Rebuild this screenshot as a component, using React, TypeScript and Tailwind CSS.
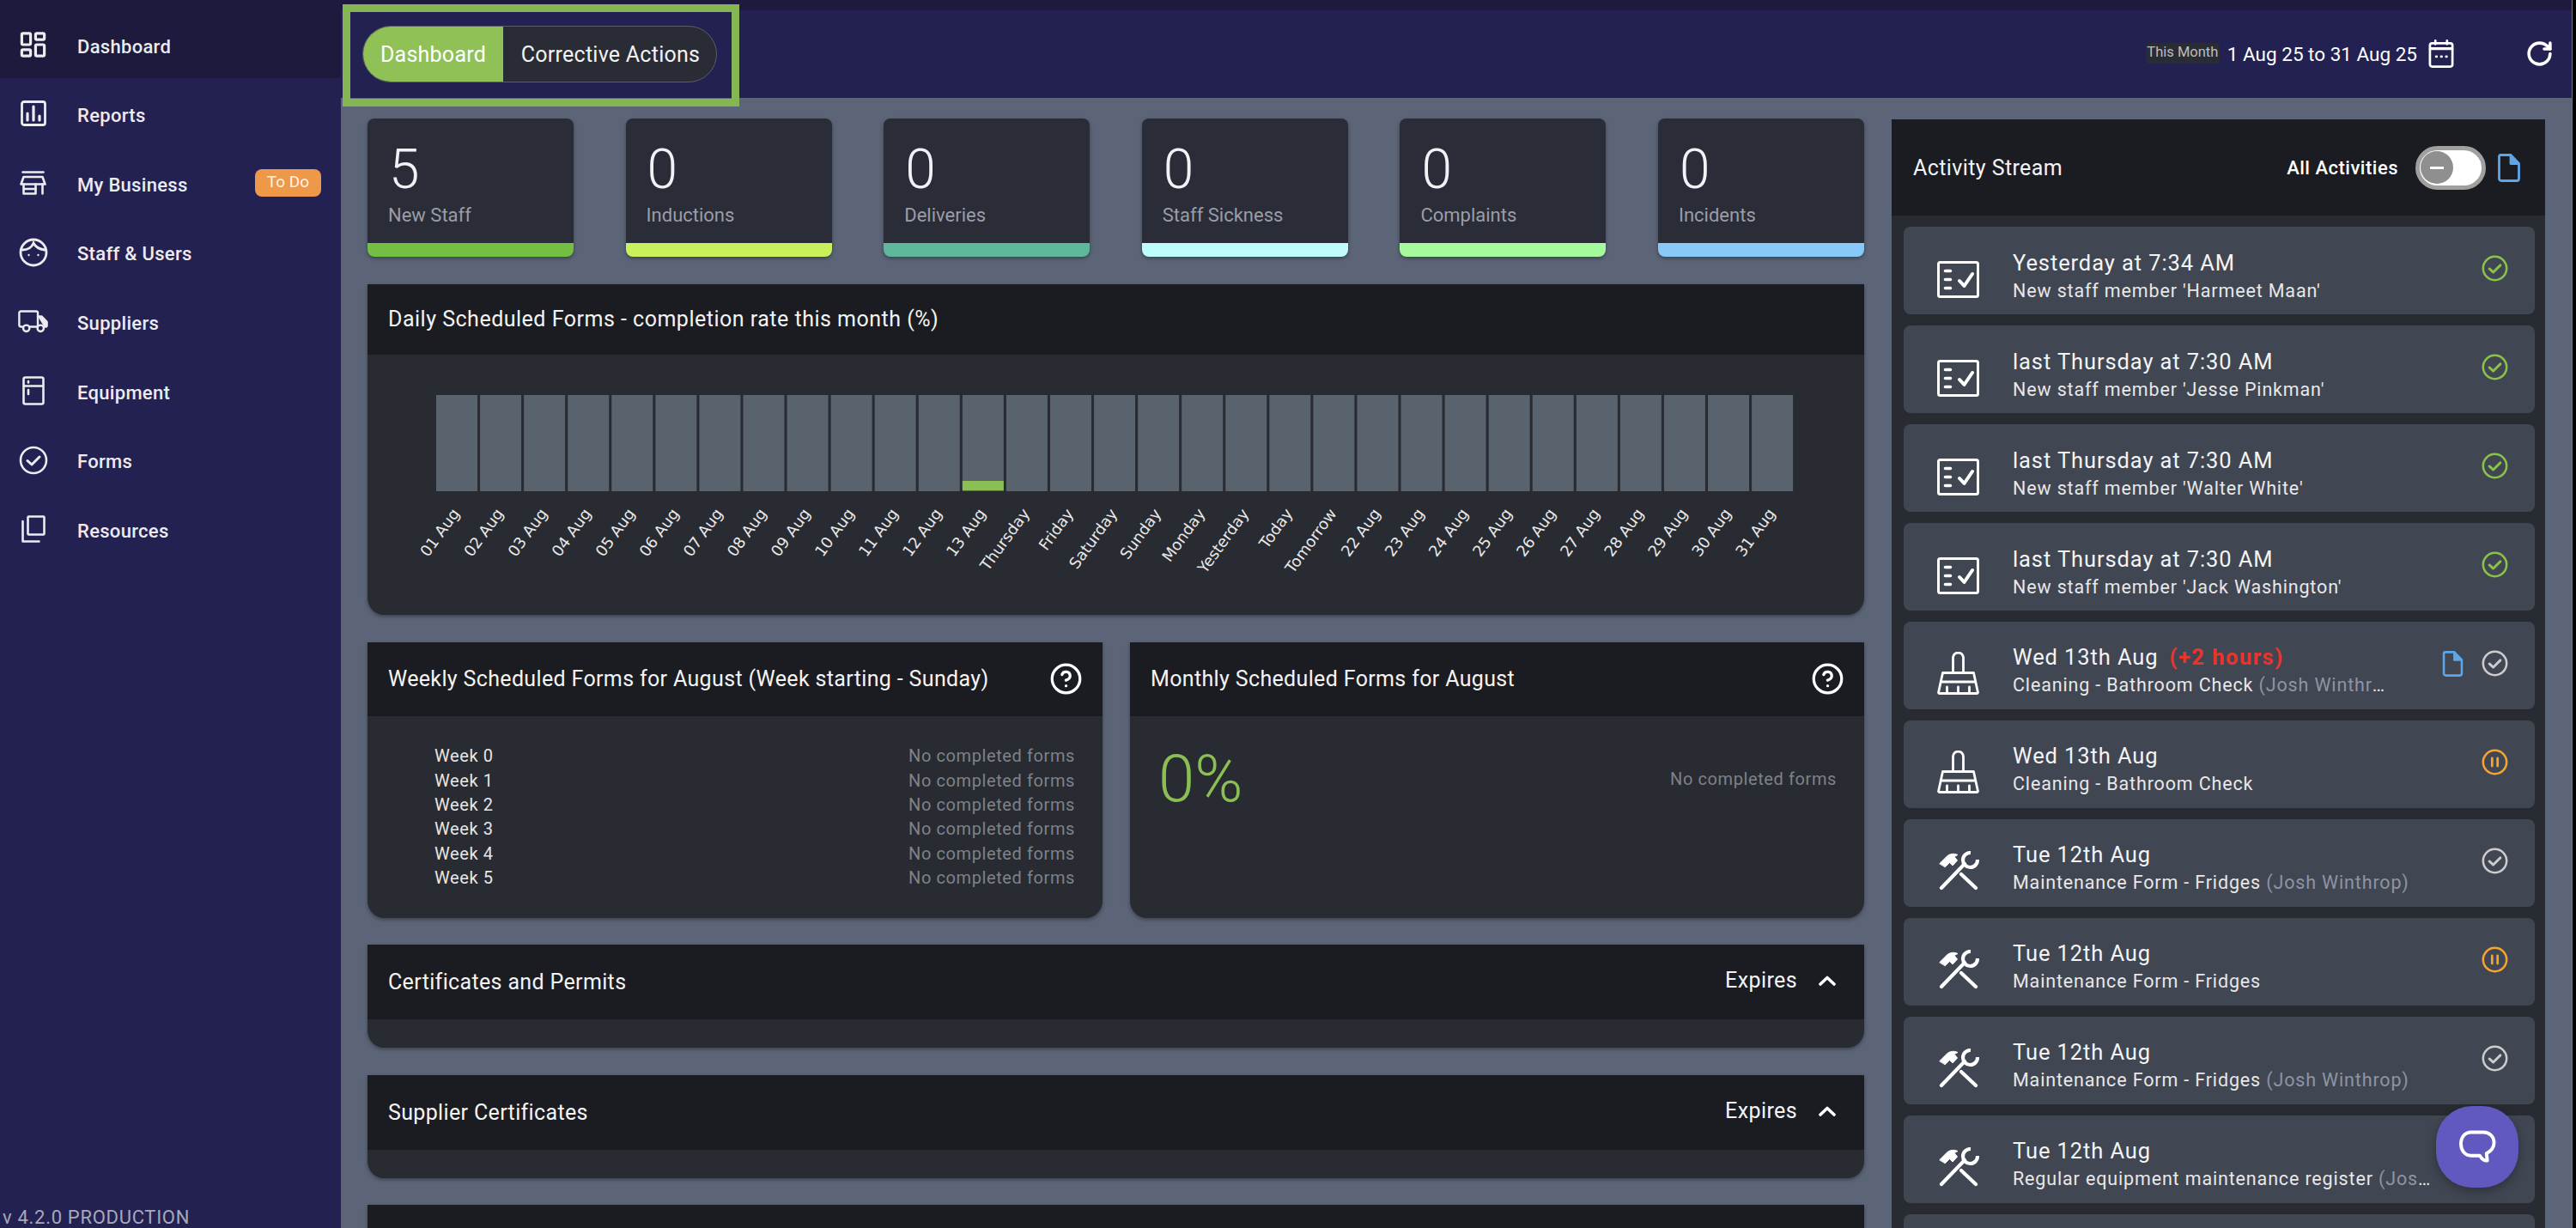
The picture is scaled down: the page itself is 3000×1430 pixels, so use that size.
import React from "react";
import { CircleHelp, LayoutDashboard, RotateCw } from "lucide-react";

const FONT = "font-['Roboto','Liberation_Sans',sans-serif]";

function ReportsIcon() {
  return (
    <svg viewBox="0 0 30 30" className="w-[30px] h-[30px]" fill="none" stroke="#ecebf0" strokeWidth="2.8" strokeLinecap="round">
      <rect x="1.5" y="1.5" width="27" height="27" rx="2.5" />
      <path d="M8 15v8M15 7v16M22 18v5" strokeWidth="3.2" />
    </svg>
  );
}
function StoreIcon() {
  return (
    <svg viewBox="0 0 30 28" className="w-[31px] h-[28px]" fill="none" stroke="#ecebf0" strokeWidth="2.6" strokeLinejoin="round" strokeLinecap="round">
      <path d="M3 1.5h24" />
      <path d="M4 7h22l3 8.5H1z" />
      <path d="M4 15.5V26.5h14V15.5M26 15.5v11" />
      <path d="M5 21h13" />
    </svg>
  );
}
function FaceIcon() {
  return (
    <svg viewBox="0 0 34 34" className="w-[34px] h-[34px]" fill="none" stroke="#ecebf0" strokeWidth="2.8" strokeLinecap="round">
      <circle cx="17" cy="17" r="15" />
      <path d="M4 14c6 0 11-3 13-8 2 4 6 7 13 8" />
      <circle cx="11.5" cy="20" r="1.2" fill="#ecebf0" stroke="none" />
      <circle cx="22.5" cy="20" r="1.2" fill="#ecebf0" stroke="none" />
    </svg>
  );
}
function TruckIcon() {
  return (
    <svg viewBox="0 0 38 28" className="w-[38px] h-[28px]" fill="none" stroke="#ecebf0" strokeWidth="2.6" strokeLinecap="round" strokeLinejoin="round">
      <path d="M6 21H3.5A2 2 0 0 1 1.5 19V3.5A2 2 0 0 1 3.5 1.5H23a2 2 0 0 1 2 2V21H15" />
      <path d="M25 8h5l6.5 7v5a1 1 0 0 1-1 1H33" fill="#ecebf0" />
      <circle cx="10.5" cy="23" r="4" />
      <circle cx="28.5" cy="23" r="4" />
    </svg>
  );
}
function FridgeIcon() {
  return (
    <svg viewBox="0 0 26 34" className="w-[26px] h-[34px]" fill="none" stroke="#ecebf0" strokeWidth="2.6" strokeLinecap="round">
      <rect x="1.5" y="1.5" width="23" height="31" rx="2" />
      <path d="M2 11.5h22M7 6v1.5M7 16v5" />
    </svg>
  );
}
function CircleCheck({ color = "#ecebf0", size = 34, sw = 2.6 }: { color?: string; size?: number; sw?: number }) {
  return (
    <svg viewBox="0 0 34 34" style={{ width: size, height: size }} fill="none" stroke={color} strokeWidth={sw} strokeLinecap="round" strokeLinejoin="round">
      <circle cx="17" cy="17" r="15" />
      <path d="M10 17.5l5 4.5 9-9" strokeWidth={sw + 0.4} />
    </svg>
  );
}
function CirclePause() {
  return (
    <svg viewBox="0 0 34 34" className="w-[31px] h-[31px]" fill="none" stroke="#f4a52e" strokeWidth="2.8" strokeLinecap="round">
      <circle cx="17" cy="17" r="15" />
      <path d="M13.5 12v10M20.5 12v10" strokeWidth="3" />
    </svg>
  );
}
function ResourcesIcon() {
  return (
    <svg viewBox="0 0 28 32" className="w-[28px] h-[32px]" fill="none" stroke="#ecebf0" strokeWidth="2.6" strokeLinecap="round" strokeLinejoin="round">
      <rect x="7.5" y="1.5" width="19" height="21" rx="1" />
      <path d="M1.5 7v23.5h19" />
    </svg>
  );
}
function CalendarIcon() {
  return (
    <svg viewBox="0 0 30 34" className="w-[30px] h-[33px]" fill="none" stroke="#ffffff" strokeWidth="2.8" strokeLinecap="round" strokeLinejoin="round">
      <rect x="1.5" y="4.5" width="27" height="28" rx="2.5" />
      <path d="M2 11h26" strokeWidth="3.4" />
      <path d="M8 1.5v4M22 1.5v4" />
      <path d="M9 20.5h.5M15 20.5h.5M21 20.5h.5" strokeWidth="3" />
    </svg>
  );
}
function DocIcon({ className = "w-[26px] h-[33px]" }: { className?: string }) {
  return (
    <svg viewBox="0 0 26 33" className={className} fill="none" stroke="#5ea6ea" strokeWidth="2.8" strokeLinejoin="round">
      <path d="M2.5 1.5H15l9.5 10V29a2.5 2.5 0 0 1-2.5 2.5H4A2.5 2.5 0 0 1 1.5 29V3.5a2 2 0 0 1 1-2z" />
      <path d="M15 1.5V11.5h9.5" fill="#5ea6ea" />
    </svg>
  );
}
function ChecklistIcon() {
  return (
    <svg viewBox="0 0 49 43" className="w-[49px] h-[43px]" fill="none" stroke="#ffffff" strokeWidth="3" strokeLinecap="round" strokeLinejoin="round">
      <rect x="1.5" y="1.5" width="46" height="40" rx="2" />
      <path d="M9.5 11.5h6M9.5 21.5h6M9.5 31.5h6" strokeWidth="3.6" />
      <path d="M26 23l5.5 6L41 15" strokeWidth="4" />
    </svg>
  );
}
function BroomIcon() {
  return (
    <svg viewBox="0 0 49 50" className="w-[49px] h-[50px]" fill="none" stroke="#ffffff" strokeWidth="2.8" strokeLinecap="round" strokeLinejoin="round">
      <path d="M18.5 24V7a6 6 0 0 1 12 0V24" />
      <path d="M6.5 24.5H42.5L47.5 47.5a1.5 1.5 0 0 1-1.5 1H3a1.5 1.5 0 0 1-1.5-1z" />
      <path d="M5 35h39" />
      <path d="M11.5 48v-7M24.5 48v-7M37.5 48v-7" />
    </svg>
  );
}
function ToolsIcon() {
  return (
    <svg viewBox="0 0 48 46" className="w-[48px] h-[46px]" fill="none" stroke="#ffffff" strokeLinecap="round" strokeLinejoin="round">
      <path d="M4 43L31 15" strokeWidth="4.2" />
      <path d="M38 2A8.500 8.500 0 1 0 46 10" strokeWidth="4.2" strokeLinecap="butt" />
      <path d="M27 27L44 43" strokeWidth="4.2" />
      <path d="M2 14.500L10.500 6c3.500-3 8-3.500 12.500-1.500l-4 2 3.500 4.500-5.500 6-3.500-3.500-5 5z" strokeWidth="1" fill="#ffffff" />
    </svg>
  );
}
function ChatIcon() {
  return (
    <svg viewBox="0 0 44 40" className="w-[43px] h-[39px]" fill="none" stroke="#ffffff" strokeWidth="4" strokeLinejoin="round">
      <path d="M14 2.500h15c7 0 12.500 5 12.500 12.500S36 26 32.500 28l1 8.500c-3 .5-7-2-9-6H14C7 30.500 2 24.500 2 16.500S7 2.500 14 2.500z" />
    </svg>
  );
}

const NAV: { label: string; icon: React.ReactNode; badge?: string }[] = [
  { label: "Reports", icon: <ReportsIcon /> },
  { label: "My Business", icon: <StoreIcon />, badge: "To Do" },
  { label: "Staff & Users", icon: <FaceIcon /> },
  { label: "Suppliers", icon: <TruckIcon /> },
  { label: "Equipment", icon: <FridgeIcon /> },
  { label: "Forms", icon: <CircleCheck /> },
  { label: "Resources", icon: <ResourcesIcon /> },
];

function Sidebar() {
  return (
    <aside className="w-[397px] shrink-0 h-full bg-[#232152] flex flex-col relative">
      <div className="h-[91px] pt-[17px] bg-[#1d1a3d] flex items-center pl-[21px]">
        <span className="w-[35px] flex justify-center -mt-[4px]">
          <LayoutDashboard size={38} strokeWidth={2.2} color="#ecebf0" />
        </span>
        <span className="ml-[34px] text-[22px] font-medium text-[#ecebf0] tracking-[0.3px]">Dashboard</span>
      </div>
      <div className="mt-[3px] flex flex-col">
        {NAV.map((n) => (
          <div key={n.label} className="h-[80.7px] flex items-center pl-[21px] pr-[23px]">
            <span className="w-[35px] flex justify-center -mt-[4px]">{n.icon}</span>
            <span className="ml-[34px] text-[22px] font-medium text-[#ecebf0] tracking-[0.3px]">{n.label}</span>
            {n.badge && (
              <span className="ml-auto -mt-[5px] w-[77px] h-[32px] rounded-[8px] bg-[#ee9849] text-[#fdf3e6] text-[19px] flex items-center justify-center">
                {n.badge}
              </span>
            )}
          </div>
        ))}
      </div>
      <div className="absolute left-[3px] bottom-0 h-[24px] text-[22px] leading-[24px] tracking-[0.7px] text-[#a8a8b8] whitespace-nowrap">v 4.2.0 PRODUCTION</div>
    </aside>
  );
}

function TopBar() {
  return (
    <div className="shrink-0">
      <div className="h-[12px] bg-[#1d1a3d]" />
      <div className="h-[102px] bg-[#232152] flex items-center pl-[25px] pr-[22px]">
        <div className="relative">
          <div className="flex h-[66px] w-[413px] rounded-full border border-[#5b5e68] bg-[#2a2c35] overflow-hidden text-[25px] tracking-[0.25px] text-white">
            <div className="w-[163px] bg-[#8fc157] flex items-center justify-center pt-[2px]">Dashboard</div>
            <div className="flex-1 flex items-center justify-center pl-[2px] pt-[2px] text-[#f2f2f2]">Corrective Actions</div>
          </div>
          <div className="absolute -left-[23px] -right-[26px] -top-[25.500px] -bottom-[28px] border-[9px] border-[#86b553]" />
        </div>
        <div className="ml-auto flex items-center">
          <span className="h-[24px] w-[86px] rounded-[4px] bg-[#2a2c35] text-[#bdbdbd] text-[16.500px] flex items-center justify-center -mt-[3px]">This Month</span>
          <span className="ml-[9px] text-[22.500px] text-white pt-[1px]">1 Aug 25 to 31 Aug 25</span>
          <span className="ml-[13px] -mt-[2px]"><CalendarIcon /></span>
          <span className="ml-[83px] -mt-[1px]"><RotateCw size={33} strokeWidth={2.6} color="#ffffff" /></span>
        </div>
      </div>
    </div>
  );
}

const STATS = [
  { n: "5", l: "New Staff", c: "bg-[#72bf44]" },
  { n: "0", l: "Inductions", c: "bg-[#c9f15b]" },
  { n: "0", l: "Deliveries", c: "bg-[#5fb89b]" },
  { n: "0", l: "Staff Sickness", c: "bg-[#bffdfd]" },
  { n: "0", l: "Complaints", c: "bg-[#a5fa9e]" },
  { n: "0", l: "Incidents", c: "bg-[#89c9f8]" },
];

function StatCard({ n, l, c }: { n: string; l: string; c: string }) {
  return (
    <div className="w-[240px] h-[161px] rounded-[8px] overflow-hidden bg-[#2a2c37] flex flex-col shadow-[0_2px_4px_rgba(0,0,0,0.35)]">
      <div className="flex-1 pl-[25px] flex flex-col">
        <div className="text-[64px] leading-[64px] font-light text-[#f2f2f6] mt-[28px]">{n}</div>
        <div className="text-[22px] leading-[26px] -ml-[1px] text-[#9b9da8] mt-[8px]">{l}</div>
      </div>
      <div className={`h-[16px] ${c}`} />
    </div>
  );
}

const DAYS = [
  "01 Aug","02 Aug","03 Aug","04 Aug","05 Aug","06 Aug","07 Aug","08 Aug","09 Aug","10 Aug","11 Aug","12 Aug","13 Aug",
  "Thursday","Friday","Saturday","Sunday","Monday","Yesterday","Today","Tomorrow",
  "22 Aug","23 Aug","24 Aug","25 Aug","26 Aug","27 Aug","28 Aug","29 Aug","30 Aug","31 Aug",
];

function Chart() {
  return (
    <svg viewBox="0 0 1743 303" className="block w-[1743px] h-[303px]">
      {DAYS.map((d, i) => {
        const x = 80 + i * 51.07;
        return (
          <g key={d}>
            <rect x={x} y={47} width={48} height={112} fill="#59636d" />
            {i === 12 && <rect x={x} y={147} width={48} height={11} fill="#8bbf54" />}
            <text
              x={x + 28}
              y={185}
              textAnchor="end"
              transform={`rotate(-54 ${x + 28} 185)`}
              fontSize="18"
              fontFamily="'DejaVu Sans',sans-serif"
              fill="#e8e8e8"
            >
              {d}
            </text>
          </g>
        );
      })}
    </svg>
  );
}

function Panel({ title, right, headH = "h-[84px]", track = "tracking-[0.35px]", className = "", children }: { title?: string; right?: React.ReactNode; headH?: string; track?: string; className?: string; children?: React.ReactNode }) {
  return (
    <section className={`bg-[#282b32] rounded-b-[20px] overflow-hidden shadow-[0_2px_4px_rgba(0,0,0,0.35)] ${className}`}>
      <header className={`${headH} ${track} bg-[#1b1c21] flex items-center justify-between pl-[24px] pr-[20px] text-[25px] text-[#f4f4f4]`}>
        <span>{title}</span>
        {right}
      </header>
      {children}
    </section>
  );
}

function Expires() {
  return (
    <span className="flex items-center gap-[25px] pr-[13px] -mt-[3px] text-[25px] tracking-[0.4px]">
      Expires
      <svg viewBox="0 0 20 12" className="w-[20px] h-[12px]" fill="none" stroke="#ffffff" strokeWidth="3.600" strokeLinecap="round" strokeLinejoin="round">
        <path d="M2 10l8-7.500 8 7.500" />
      </svg>
    </span>
  );
}

const NO = "No completed forms";

function Weekly() {
  return (
    <Panel
      title="Weekly Scheduled Forms for August (Week starting - Sunday)"
      headH="h-[86px]"
      right={<CircleHelp size={39} strokeWidth={2} color="#fff" className="-mt-[2px] mr-[3px]" />}
      className="w-[856px] h-[321px]"
    >
      <div className="pl-[78px] pr-[32px] pt-[32px] flex flex-col">
        {[0, 1, 2, 3, 4, 5].map((w) => (
          <div key={w} className="h-[28.4px] flex items-center justify-between text-[20px] tracking-[0.6px]">
            <span className="text-[#e6e6e6]">Week {w}</span>
            <span className="text-[#7f8287]">{NO}</span>
          </div>
        ))}
      </div>
    </Panel>
  );
}

function Monthly() {
  return (
    <Panel
      title="Monthly Scheduled Forms for August"
      headH="h-[86px]"
      right={<CircleHelp size={39} strokeWidth={2} color="#fff" className="-mt-[2px] mr-[3px]" />}
      className="flex-1 h-[321px]"
    >
      <div className="flex items-center justify-between pl-[33px] pr-[32px] h-[146px]">
        <span className="text-[76px] font-light text-[#8bbf54] leading-none">0%</span>
        <span className="text-[20px] tracking-[0.6px] text-[#7f8287]">{NO}</span>
      </div>
    </Panel>
  );
}

type Item = { icon: React.ReactNode; t: string; extra?: string; s: string; who?: string; status: "ok" | "done" | "pause"; doc?: boolean; maxW: string };

const tools = <ToolsIcon />;
const broom = <BroomIcon />;
const check = <ChecklistIcon />;

const ITEMS: Item[] = [
  { icon: check, t: "Yesterday at 7:34 AM", s: "New staff member 'Harmeet Maan'", status: "ok", maxW: "max-w-[500px]" },
  { icon: check, t: "last Thursday at 7:30 AM", s: "New staff member 'Jesse Pinkman'", status: "ok", maxW: "max-w-[500px]" },
  { icon: check, t: "last Thursday at 7:30 AM", s: "New staff member 'Walter White'", status: "ok", maxW: "max-w-[500px]" },
  { icon: check, t: "last Thursday at 7:30 AM", s: "New staff member 'Jack Washington'", status: "ok", maxW: "max-w-[500px]" },
  { icon: broom, t: "Wed 13th Aug", extra: "(+2 hours)", s: "Cleaning - Bathroom Check ", who: "(Josh Winthrop)", status: "done", doc: true, maxW: "max-w-[443px]" },
  { icon: broom, t: "Wed 13th Aug", s: "Cleaning - Bathroom Check", status: "pause", maxW: "max-w-[500px]" },
  { icon: tools, t: "Tue 12th Aug", s: "Maintenance Form - Fridges ", who: "(Josh Winthrop)", status: "done", maxW: "max-w-[500px]" },
  { icon: tools, t: "Tue 12th Aug", s: "Maintenance Form - Fridges", status: "pause", maxW: "max-w-[500px]" },
  { icon: tools, t: "Tue 12th Aug", s: "Maintenance Form - Fridges ", who: "(Josh Winthrop)", status: "done", maxW: "max-w-[500px]" },
  { icon: tools, t: "Tue 12th Aug", s: "Regular equipment maintenance register ", who: "(Josh Winthrop)", status: "done", maxW: "max-w-[491px]" },
];

function ActivityRow({ it, lower }: { it: Item; lower: boolean }) {
  return (
    <div className="h-[102px] rounded-[8px] bg-[#414653] flex relative pl-[39px] shrink-0">
      <div className={`w-[49px] h-[102px] flex items-center justify-center shrink-0 ${lower ? "mt-[9px]" : "mt-[10px]"}`}>{it.icon}</div>
      <div className={`ml-[39px] flex flex-col min-w-0 ${lower ? "pt-[25px]" : "pt-[26px]"}`}>
        <div className="text-[25.500px] leading-[32px] text-[#f4f4f4] tracking-[0.9px] whitespace-nowrap">
          {it.t}
          {it.extra && <span className="ml-[13px] font-bold tracking-[1.5px] text-[#e8352b]">{it.extra}</span>}
        </div>
        <div className={`text-[21.500px] leading-[28px] mt-[3px] text-[#e8e8e8] tracking-[0.85px] truncate ${it.maxW}`}>
          {it.s}
          {it.who && <span className="text-[#8f94a3]">{it.who}</span>}
        </div>
      </div>
      <div className="absolute right-[31px] top-[33px] flex items-center gap-[21px]">
        {it.doc && <DocIcon className="w-[25px] h-[30px]" />}
        {it.status === "ok" && <CircleCheck color="#8bc34a" size={31} sw={2.8} />}
        {it.status === "done" && <CircleCheck color="#cccccc" size={31} sw={2.8} />}
        {it.status === "pause" && <CirclePause />}
      </div>
    </div>
  );
}

function Activity() {
  return (
    <section className="w-[761px] h-[1291px] mt-[1px] shrink-0 bg-[#282b32] flex flex-col overflow-hidden">
      <header className="h-[112px] shrink-0 bg-[#1b1c21] flex items-center pl-[25px] pr-[29px] text-white">
        <span className="text-[25px] tracking-[0.4px] pt-[1px] text-[#f4f4f4]">Activity Stream</span>
        <span className="ml-auto text-[22px] font-medium tracking-[0.5px]">All Activities</span>
        <span className="ml-[20px] w-[82px] h-[51px] rounded-full bg-white border-[5px] border-[#a0a0a0] flex items-center pl-[1px]">
          <span className="w-[38px] h-[38px] rounded-full bg-[#8f8f8f] flex items-center justify-center">
            <span className="w-[16px] h-[3px] bg-white" />
          </span>
        </span>
        <span className="ml-[14px]"><DocIcon /></span>
      </header>
      <div className="flex flex-col gap-[13px] pt-[13px] pl-[14px] pr-[12px]">
        {ITEMS.map((it, i) => (
          <ActivityRow key={i} it={it} lower={i >= 4} />
        ))}
        <div className="h-[102px] rounded-[8px] bg-[#414653] shrink-0" />
      </div>
    </section>
  );
}

function ChatButton() {
  return (
    <div className="absolute left-[2837px] top-[1288px] w-[96px] h-[95px] rounded-[42px] bg-[#6259c0] shadow-[0_4px_12px_rgba(0,0,0,0.3)] flex items-center justify-center">
      <ChatIcon />
    </div>
  );
}

export default function App() {
  return (
    <div className={`${FONT} w-[3000px] h-[1430px] overflow-hidden flex bg-black relative`}>
      <Sidebar />
      <main className="w-[2599px] h-full bg-[#5b6577] flex flex-col overflow-hidden">
        <TopBar />
        <div className="flex gap-[32px] pl-[31px] pt-[24px]">
          <div className="w-[1743px] shrink-0 flex flex-col">
            <div className="flex justify-between">
              {STATS.map((s) => (
                <StatCard key={s.l} {...s} />
              ))}
            </div>
            <Panel title="Daily Scheduled Forms - completion rate this month (%)" headH="h-[82px]" track="tracking-[0.5px]" className="mt-[32px] h-[385px]">
              <Chart />
            </Panel>
            <div className="mt-[32px] flex gap-[32px]">
              <Weekly />
              <Monthly />
            </div>
            <Panel title="Certificates and Permits" headH="h-[87px]" right={<Expires />} className="mt-[31px] h-[120px]" />
            <Panel title="Supplier Certificates" headH="h-[87px]" right={<Expires />} className="mt-[32px] h-[120px]" />
            <Panel headH="h-[87px]" className="mt-[31px] h-[120px]" />
          </div>
          <Activity />
        </div>
      </main>
      <div className="absolute right-[4px] top-0 bottom-0 w-[1px] bg-[#6b7384]" />
      <ChatButton />
    </div>
  );
}
